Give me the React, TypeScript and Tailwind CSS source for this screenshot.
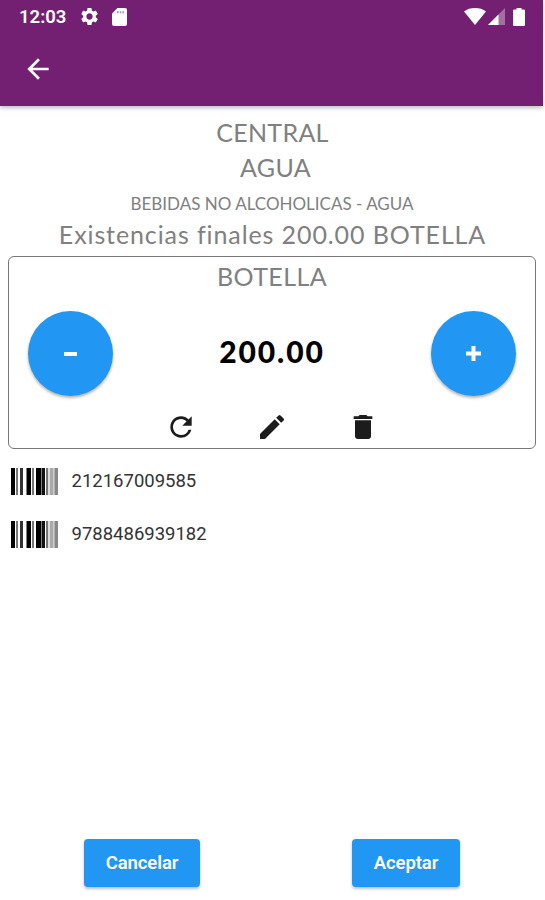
import { MdArrowBack, MdDelete, MdEdit, MdRefresh, MdSettings } from "react-icons/md";

const barcodes = ["212167009585", "9788486939182"];

// x, width, fill
const bars: [number, number, string][] = [
  [0, 4, "#000"],
  [5, 2, "#777"],
  [9, 3, "#333"],
  [15.5, 4.5, "#000"],
  [21, 2, "#777"],
  [25, 5.5, "#000"],
  [31, 3, "#111"],
  [35, 2, "#777"],
  [37, 2, "#ddd"],
  [39, 3, "#aaa"],
  [42, 1.5, "#ccc"],
  [43.5, 3.5, "#888"],
];

function Barcode() {
  return (
    <svg className="w-[47px] h-[27px]" viewBox="0 0 47 27">
      {bars.map(([x, w, fill]) => (
        <rect key={x} x={x} y="0" width={w} height="27" fill={fill} />
      ))}
    </svg>
  );
}

function StatusBar() {
  return (
    <div className="flex h-[33px] items-center pl-[19px] pr-[18px] text-white">
      <span className="w-[60px] pt-[2px] font-[Roboto] text-[18.5px] font-semibold">12:03</span>
      <MdSettings className="size-[21px]" />
      <svg className="ml-[12px] h-[18px] w-[15px]" viewBox="0 0 15 18" fill="currentColor">
        <path d="M5.500 0H13a2 2 0 0 1 2 2v14a2 2 0 0 1-2 2H2a2 2 0 0 1-2-2V5.500z" />
        <path d="M5 3.200h1.600v2H5zM7.700 3.200h1.600v2H7.700zM10.400 3.200H12v2h-1.600z" fill="#732073" opacity="0.55" />
      </svg>
      <svg className="ml-auto h-[17px] w-[22px]" viewBox="0 0 22 17" fill="currentColor">
        <path d="M11 17 0 3.400C3 1.200 6.800 0 11 0s8 1.200 11 3.400z" />
      </svg>
      <svg className="ml-[2px] h-[17px] w-[17px]" viewBox="0 0 17 17" fill="currentColor">
        <path d="M17 0v17H0z" opacity="0.35" />
        <path d="M10.500 6.500V17H0z" />
      </svg>
      <svg className="ml-[8px] h-[18px] w-[12px]" viewBox="0 0 12 18" fill="currentColor">
        <path d="M3.500 0h5v1.500h2.200c.7 0 1.300.6 1.300 1.300v13.900c0 .7-.6 1.300-1.300 1.300H1.300C.6 18 0 17.400 0 16.700V2.800c0-.7.6-1.300 1.300-1.300h2.200z" />
      </svg>
    </div>
  );
}

export default function App() {
  return (
    <main className="flex h-[900px] w-[545px] flex-col overflow-hidden bg-white font-[Lato,sans-serif]">
      <header className="mr-[2px] h-[106px] bg-[#732073] shadow-[0_2px_4px_rgba(0,0,0,0.25)]">
        <StatusBar />
        <button className="ml-[21.5px] mt-5 block text-white">
          <MdArrowBack className="size-8" />
        </button>
      </header>

      <section className="flex flex-col items-center pt-[9px] text-[25px] text-[#808080]">
        <h1 className="h-[35px] leading-[35px] tracking-[0.3px]">CENTRAL</h1>
        <h2 className="h-[35px] pl-[6px] leading-[35px] tracking-[0.4px]">AGUA</h2>
        <p className="h-[35px] pr-px pt-px text-[17px] leading-[35px]">
          BEBIDAS NO ALCOHOLICAS - AGUA
        </p>
        <p className="h-[29px] leading-[29px] tracking-[0.9px]">
          Existencias finales 200.00 BOTELLA
        </p>
      </section>

      <section className="ml-2 mt-[7px] h-[193px] w-[528px] shrink-0 rounded-[6px] border border-[#777]">
        <h3 className="h-9 pt-[3px] text-center text-[25px] leading-[32px] tracking-[0.4px] text-[#808080]">
          BOTELLA
        </h3>
        <div className="mt-[18px] flex h-[85px] items-center justify-between pl-[19px] pr-[19px]">
          <button className="flex size-[85px] items-center justify-center rounded-full bg-[#2196f3] shadow-[0_2px_3px_rgba(0,0,0,0.3)]">
            <svg className="h-1 w-[13px]" viewBox="0 0 13 4">
              <rect width="13" height="4" rx="0.5" fill="#fff" />
            </svg>
          </button>
          <span className="pb-[6px] text-[30px] font-black leading-[40px] tracking-[1.9px] text-black">
            200.00
          </span>
          <button className="flex size-[85px] items-center justify-center rounded-full bg-[#2196f3] shadow-[0_2px_3px_rgba(0,0,0,0.3)]">
            <svg className="size-[15px]" viewBox="0 0 15 15" fill="#fff">
              <path d="M5.500 0h4v5.500H15v4H9.500V15h-4V9.500H0v-4h5.500z" />
            </svg>
          </button>
        </div>
        <div className="mt-[15px] flex justify-center gap-[59px] text-[#1c1c1c]">
          <MdRefresh className="size-8" />
          <MdEdit className="size-8" />
          <MdDelete className="size-8" />
        </div>
      </section>

      <ul className="ml-[11px] mt-[18.5px] flex flex-col gap-[26px]">
        {barcodes.map((code) => (
          <li key={code} className="flex h-[27px] items-center gap-[13.5px]">
            <Barcode />
            <span className="pt-[2px] font-[Roboto] text-[18.5px] text-[#333]">{code}</span>
          </li>
        ))}
      </ul>

      <footer className="mb-[13px] ml-[84px] mt-auto flex gap-[152px] font-[Roboto] text-[18.5px] font-semibold text-white">
        <button className="h-12 w-[116px] rounded-[4px] bg-[#2196f3] pt-[2px] tracking-[-0.1px] shadow-[0_2px_3px_rgba(0,0,0,0.25)]">
          Cancelar
        </button>
        <button className="h-12 w-[108px] rounded-[4px] bg-[#2196f3] pt-[2px] tracking-[-0.1px] shadow-[0_2px_3px_rgba(0,0,0,0.25)]">
          Aceptar
        </button>
      </footer>
    </main>
  );
}
